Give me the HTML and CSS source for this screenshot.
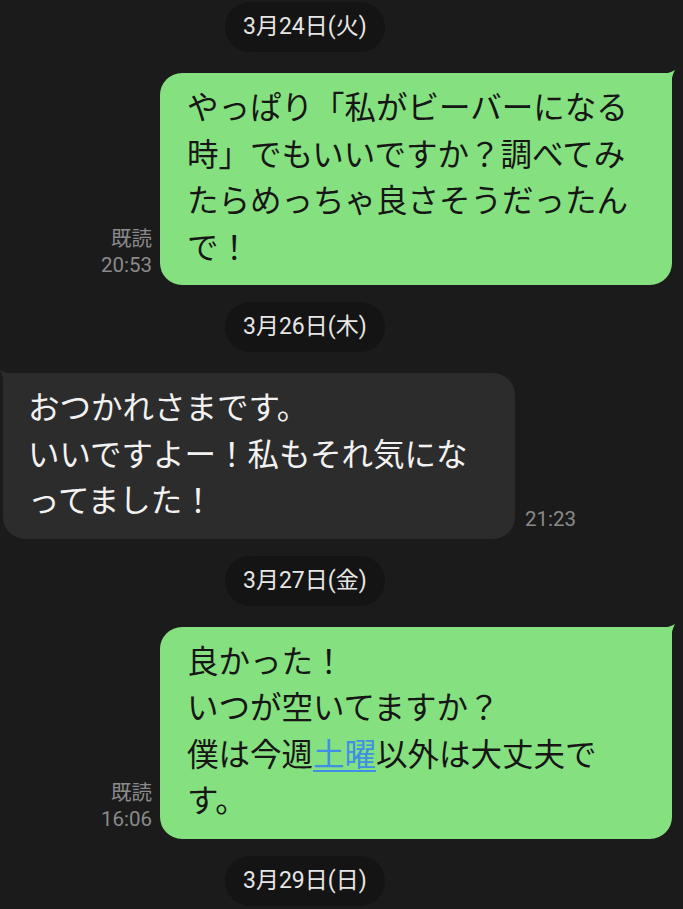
FILE: index.html
```html
<!DOCTYPE html>
<html lang="ja">
<head>
<meta charset="utf-8">
<title>Chat</title>
<link rel="stylesheet" href="styles.css">
</head>
<body>
<div class="chat">
  <div class="date-row"><span class="date-pill">3月24日(火)</span></div>

  <div class="msg-row mine">
    <div class="meta"><span>既読</span><span>20:53</span></div>
    <div class="bubble green">
      <svg class="tail tail-right" viewBox="0 0 18 18" width="18" height="18"><path d="M0 4 Q11 4 17 0 Q13 7 13 18 L0 18 Z"/></svg>
      やっぱり「私がビーバーになる時」でもいいですか？調べてみたらめっちゃ良さそうだったんで！
    </div>
  </div>

  <div class="date-row"><span class="date-pill">3月26日(木)</span></div>

  <div class="msg-row theirs">
    <div class="bubble gray">
      <svg class="tail tail-left" viewBox="0 0 18 18" width="18" height="18"><path d="M18 4 Q7 4 1 0 Q5 7 5 18 L18 18 Z"/></svg>
      おつかれさまです。<br>いいですよー！私もそれ気になってました！
    </div>
    <div class="meta"><span>21:23</span></div>
  </div>

  <div class="date-row"><span class="date-pill">3月27日(金)</span></div>

  <div class="msg-row mine">
    <div class="meta"><span>既読</span><span>16:06</span></div>
    <div class="bubble green">
      <svg class="tail tail-right" viewBox="0 0 18 18" width="18" height="18"><path d="M0 4 Q11 4 17 0 Q13 7 13 18 L0 18 Z"/></svg>
      良かった！<br>いつが空いてますか？<br>僕は今週<a class="link" href="#">土曜</a>以外は大丈夫です。
    </div>
  </div>

  <div class="date-row"><span class="date-pill">3月29日(日)</span></div>
</div>
</body>
</html>
```

FILE: styles.css
```css
html, body {
  margin: 0;
  padding: 0;
  background: #1b1b1b;
}

body {
  width: 683px;
  height: 909px;
  overflow: hidden;
  font-family: Roboto, "Noto Sans CJK JP", sans-serif;
}

.chat {
  display: flex;
  flex-direction: column;
  padding-top: 2px;
}

.date-row {
  display: flex;
  padding-left: 225px;
  margin-bottom: 21px;
}

.date-pill {
  display: block;
  height: 50px;
  line-height: 50px;
  padding: 0 18px;
  border-radius: 25px;
  background: #141414;
  color: #e6e6e6;
  font-size: 23px;
}

.msg-row {
  display: flex;
  align-items: flex-end;
  gap: 8px;
  margin-bottom: 17px;
}

.msg-row.mine {
  justify-content: flex-end;
  padding-right: 11px;
}

.msg-row.theirs {
  justify-content: flex-start;
  padding-left: 3px;
  gap: 10px;
}

.meta {
  display: flex;
  flex-direction: column;
  align-items: flex-end;
  color: #8a8a8a;
  font-size: 20.5px;
  line-height: 26px;
  padding-bottom: 7px;
}

.bubble {
  position: relative;
  box-sizing: border-box;
  width: 512px;
  padding: 13px 27px 13px 27px;
  font-size: 31.5px;
  line-height: 46.5px;
  border-radius: 22px;
}

.bubble.green {
  background: #85e17f;
  color: #161616;
  border-top-right-radius: 4px;
}

.bubble.gray {
  background: #2c2c2c;
  color: #f2f2f2;
  padding-left: 25px;
  border-top-left-radius: 4px;
}

.tail {
  position: absolute;
  top: -3px;
}

.tail-right {
  right: -4px;
  fill: #85e17f;
}

.tail-left {
  left: -4px;
  fill: #2c2c2c;
}

.link {
  color: #3f8fe6;
  text-decoration: underline;
  text-underline-offset: 4px;
  text-decoration-thickness: 2px;
}
```
